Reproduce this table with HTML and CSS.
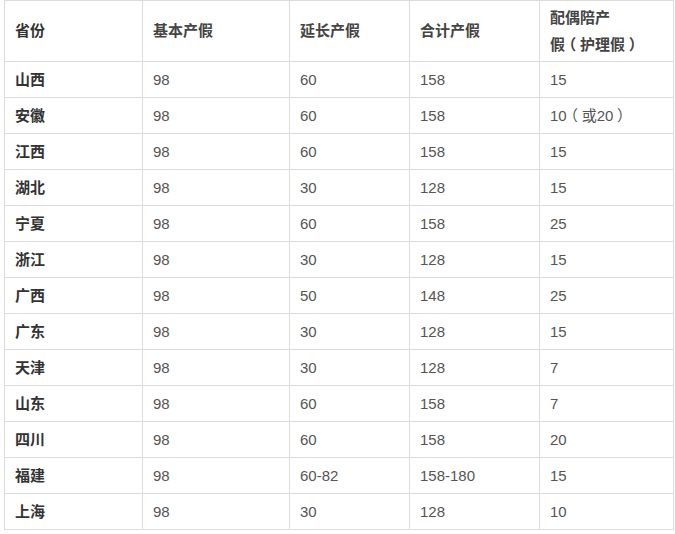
FILE: index.html
```html
<!DOCTYPE html>
<html lang="zh">
<head>
<meta charset="utf-8">
<link rel="stylesheet" href="styles.css">
</head>
<body>
<table class="leave">
  <colgroup>
    <col class="c1"><col class="c2"><col class="c3"><col class="c4"><col class="c5">
  </colgroup>
  <thead>
    <tr><th>省份</th><th>基本产假</th><th>延长产假</th><th>合计产假</th><th>配偶陪产<br>假<span class="cjk">（</span>护理假<span class="cjk">）</span></th></tr>
  </thead>
  <tbody>
    <tr><td>山西</td><td>98</td><td>60</td><td>158</td><td>15</td></tr>
    <tr><td>安徽</td><td>98</td><td>60</td><td>158</td><td>10<span class="cjk">（</span>或20<span class="cjk">）</span></td></tr>
    <tr><td>江西</td><td>98</td><td>60</td><td>158</td><td>15</td></tr>
    <tr><td>湖北</td><td>98</td><td>30</td><td>128</td><td>15</td></tr>
    <tr><td>宁夏</td><td>98</td><td>60</td><td>158</td><td>25</td></tr>
    <tr><td>浙江</td><td>98</td><td>30</td><td>128</td><td>15</td></tr>
    <tr><td>广西</td><td>98</td><td>50</td><td>148</td><td>25</td></tr>
    <tr><td>广东</td><td>98</td><td>30</td><td>128</td><td>15</td></tr>
    <tr><td>天津</td><td>98</td><td>30</td><td>128</td><td>7</td></tr>
    <tr><td>山东</td><td>98</td><td>60</td><td>158</td><td>7</td></tr>
    <tr><td>四川</td><td>98</td><td>60</td><td>158</td><td>20</td></tr>
    <tr><td>福建</td><td>98</td><td>60-82</td><td>158-180</td><td>15</td></tr>
    <tr><td>上海</td><td>98</td><td>30</td><td>128</td><td>10</td></tr>
  </tbody>
</table>
</body>
</html>
```

FILE: styles.css
```css
html, body {
  margin: 0;
  padding: 0;
  background: #fff;
}
body {
  padding: 0 2px 0 4px;
  font-family: "Liberation Sans", "Noto Sans CJK SC", sans-serif;
  font-size: 15px;
  color: #555;
}
.cjk {
  font-family: "Noto Sans CJK SC", sans-serif;
  font-feature-settings: "halt" 1;
  display: inline-block;
  width: 1em;
  text-align: center;
}
.leave {
  border-collapse: collapse;
  width: 669px;
  table-layout: fixed;
}
.c1 { width: 138px; }
.c2 { width: 147px; }
.c3 { width: 120px; }
.c4 { width: 130px; }
.c5 { width: 134px; }
.leave th,
.leave td {
  border: 1px solid #dcdcdc;
  padding: 0 10px;
  text-align: left;
  vertical-align: middle;
}
.leave th {
  height: 60px;
  font-weight: bold;
  color: #444;
  line-height: 26px;
}
.leave th:first-child {
  color: #333;
}
.leave td {
  height: 35px;
  line-height: 20px;
}
.leave td:first-child {
  font-weight: bold;
  color: #333;
}
```
